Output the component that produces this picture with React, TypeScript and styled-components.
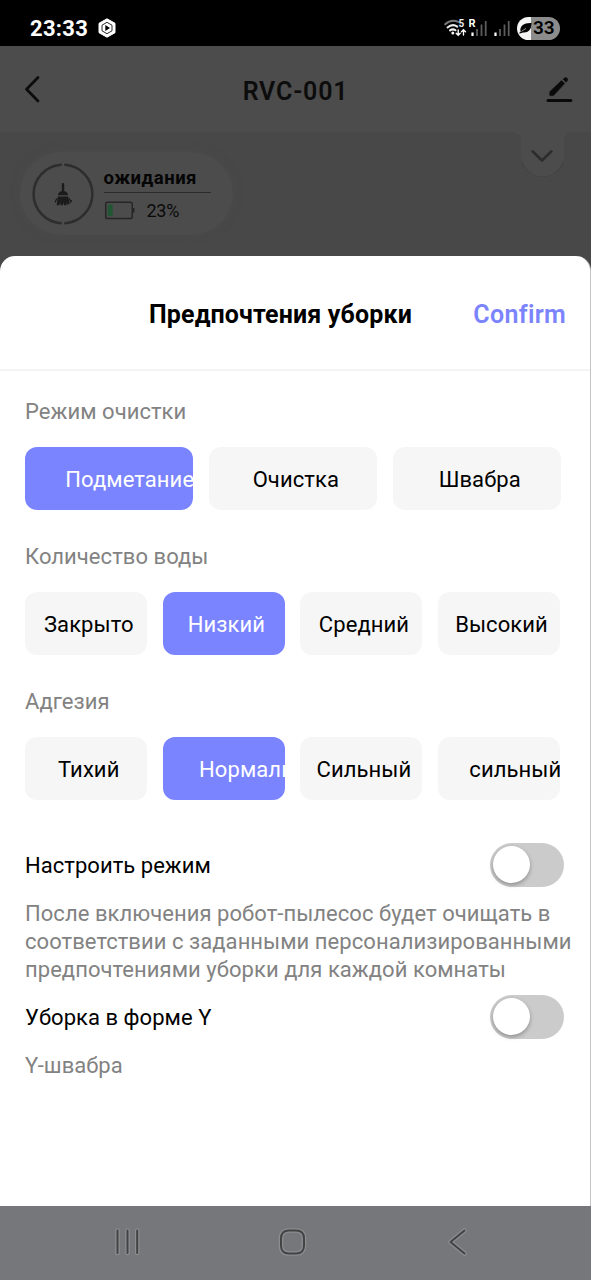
import React from 'react';
import styled, { createGlobalStyle } from 'styled-components';

const GlobalStyle = createGlobalStyle`
  *, *::before, *::after { box-sizing: border-box; }
  body { margin: 0; background: #484848; }
`;

const Screen = styled.div`
  width: 591px;
  height: 1280px;
  display: flex;
  flex-direction: column;
  overflow: hidden;
  background: #484848;
  color: #000;
  font-family: Roboto, 'Noto Sans', sans-serif;
`;

const StatusBar = styled.div`
  flex: none;
  height: 46px;
  display: flex;
  align-items: center;
  justify-content: space-between;
  padding: 10px 31px 0 30px;
  background: #000;
`;

const StatusGroup = styled.div<{ $gap: number }>`
  display: flex;
  align-items: center;
  gap: ${(p) => p.$gap}px;
`;

const Clock = styled.span`
  padding-top: 1px;
  color: #fff;
  font: 700 22px/26px Roboto, sans-serif;
  letter-spacing: 0.3px;
`;

const BatteryPill = styled.div`
  width: 43px;
  height: 23px;
  display: flex;
  align-items: center;
  border-radius: 12px;
  background: linear-gradient(90deg, #f4f4f4 0 14px, #8c8c8c 14px);
  color: #000;
  font: 600 19px/24px Roboto, sans-serif;
`;

const Header = styled.header`
  flex: none;
  height: 86px;
  display: grid;
  grid-template-columns: 48px 1fr 48px;
  align-items: center;
  padding: 0 16px;
  background: #4c4c4c;
`;

const HeaderAction = styled.div`
  display: flex;
  justify-content: flex-end;
`;

const DeviceName = styled.h1`
  margin: 0;
  padding-top: 5px;
  text-align: center;
  color: #0c0c0c;
  font-size: 25px;
  line-height: 30px;
  font-weight: 600;
  letter-spacing: 0.8px;
`;

const MapArea = styled.div`
  flex: none;
  height: 124px;
  display: flex;
  justify-content: space-between;
  align-items: flex-start;
  padding: 0 21px 0 20px;
`;

const StateCard = styled.div`
  width: 213px;
  height: 83px;
  margin-top: 20px;
  display: flex;
  align-items: center;
  gap: 9.5px;
  padding-left: 12px;
  border-radius: 42px;
  background: #4c4c4c;
  box-shadow: 0 0 8px rgba(76, 76, 76, 0.7);
`;

const StateInfo = styled.div`
  width: 107px;
  padding-top: 5px;
`;

const StateName = styled.div`
  height: 29px;
  padding-top: 3px;
  border-bottom: 1px solid #2b2b2b;
  color: #050505;
  font-size: 18.5px;
  line-height: 23px;
  font-weight: 700;
  letter-spacing: 0.5px;
`;

const BatteryLine = styled.div`
  height: 35px;
  display: flex;
  align-items: center;
  gap: 12px;
  color: #0a0a0a;
  font-size: 18px;
  line-height: 24px;
  letter-spacing: -0.3px;
`;

const Sheet = styled.section`
  flex: none;
  height: 950px;
  border-right: 1px solid #c4c4c4;
  border-radius: 15px 15px 0 0;
  background: #fff;
`;

const SheetHeader = styled.div`
  height: 115px;
  display: flex;
  align-items: center;
  justify-content: space-between;
  padding: 4px 24px 0 149px;
  border-bottom: 2px solid #f4f4f4;
`;

const SheetTitle = styled.h2`
  margin: 0;
  white-space: nowrap;
  font-size: 25px;
  line-height: 32px;
  font-weight: 700;
  letter-spacing: 0.15px;
`;

const Confirm = styled.button`
  padding: 0;
  border: 0;
  background: none;
  color: #7b84fc;
  font: 600 25px/32px Roboto, sans-serif;
  letter-spacing: 0.3px;
`;

const SheetBody = styled.div`
  padding: 26px 0 0 25px;
`;

const Group = styled.div`
  height: 145.2px;
`;

const GroupLabel = styled.div`
  height: 50px;
  color: #828282;
  font-size: 22px;
  line-height: 30px;
  letter-spacing: 0.05px;
`;

const Chips = styled.div`
  display: flex;
  gap: 15.6px;
`;

const Chip = styled.button<{ $width: number; $active?: boolean; $inset?: number }>`
  flex: none;
  width: ${(p) => p.$width}px;
  height: 62.5px;
  display: flex;
  align-items: center;
  justify-content: ${(p) => (p.$inset ? 'flex-start' : 'center')};
  padding: 3px 0 0 ${(p) => p.$inset ?? 5.5}px;
  border: 0;
  border-radius: 12px;
  overflow: hidden;
  background: ${(p) => (p.$active ? '#7b84ff' : '#f6f6f6')};
  color: ${(p) => (p.$active ? '#fff' : '#000')};
  font: 400 22px/30px Roboto, sans-serif;
  letter-spacing: 0.08px;
  white-space: nowrap;
`;

const Switches = styled.div`
  padding-top: 10.5px;
`;

const SwitchRow = styled.div`
  height: 44px;
  display: flex;
  align-items: center;
  justify-content: space-between;
  padding-right: 26px;
  font-size: 22px;
  line-height: 30px;
  letter-spacing: 0.04px;
`;

const SwitchLabel = styled.span`
  padding-top: 2px;
`;

const Toggle = styled.span`
  width: 74px;
  height: 44px;
  display: flex;
  align-items: center;
  padding: 0 0 1px 3px;
  border-radius: 22px;
  background: #cbcbcb;
`;

const Knob = styled.span`
  width: 37px;
  height: 37px;
  border-radius: 50%;
  background: #fff;
  box-shadow: 0 2px 4px rgba(0, 0, 0, 0.3);
`;

const Hint = styled.p<{ $height: number }>`
  height: ${(p) => p.$height}px;
  margin: 0;
  padding-top: 12.8px;
  color: #828282;
  font-size: 22px;
  line-height: 28.3px;
  letter-spacing: 0.05px;
  white-space: nowrap;
`;

const NavBar = styled.nav`
  flex: none;
  height: 74px;
  display: flex;
  align-items: flex-start;
  justify-content: space-between;
  padding: 20px 117px 0 111px;
  background: #76777a;
`;

const BackIcon = () => (
  <svg width="32" height="32" viewBox="0 0 32 32" fill="none" stroke="#0c0c0c" strokeWidth="2.7" strokeLinecap="round" strokeLinejoin="round">
    <path d="M22 4.5 10.5 16.2 22 28" />
  </svg>
);

const EditIcon = () => (
  <svg width="32" height="32" viewBox="0 0 32 32">
    <path d="M5 27.5h22.8" stroke="#0a0a0a" strokeWidth="3" strokeLinecap="round" />
    <path d="M6.8 22.6v-3.9L18.6 7.6l3 3L10.4 22.6Z" fill="#0a0a0a" stroke="#0a0a0a" strokeWidth=".6" strokeLinejoin="round" />
    <path d="m19.8 6.3 1.5-1.5a2.3 2.3 0 0 1 3.2 3.2L23 9.5Z" fill="#0a0a0a" />
  </svg>
);

const HexPlayIcon = () => (
  <svg width="18" height="20" viewBox="0 0 18 20">
    <path d="M9 .8 17 5.3v9.4L9 19.2 1 14.7V5.3Z" fill="#fff" stroke="#fff" strokeLinejoin="round" />
    <path d="m9 4.3 5 2.9v5.6l-5 2.9-5-2.9V7.2Z" fill="none" stroke="#111" strokeWidth=".9" />
    <path d="m7.3 7 4.7 3-4.7 3Z" fill="#000" />
  </svg>
);

const WifiIcon = () => (
  <svg width="23" height="20" viewBox="0 0 23 20" fill="none" strokeLinecap="round">
    <path d="M1.2 6.2C5 2.7 10 2 14.2 3.8" stroke="#777" strokeWidth="2" />
    <path d="M3.5 9.4c3-2.5 7-2.7 9.8-.8" stroke="#eee" strokeWidth="2" />
    <path d="M6 12.4c1.7-1.2 4-1.2 5.5-.1" stroke="#eee" strokeWidth="2" />
    <circle cx="8.8" cy="15" r="1.5" fill="#fff" />
    <path d="M14.2 12v5.3m-2-2 2 2 2-2M19.5 17v-5.3m-2 2 2-2 2 2" stroke="#fff" strokeWidth="1.4" />
    <text x="14.5" y="9" fill="#eee" fontSize="10" fontWeight="700" fontFamily="Roboto">5</text>
  </svg>
);

const SignalIcon = ({ roaming }: { roaming?: boolean }) => (
  <svg width={roaming ? 18 : 16} height="20" viewBox={roaming ? '0 0 18 20' : '0 0 16 20'}>
    <g transform={roaming ? 'translate(2 0)' : undefined}>
      <path d="M1.5 14.5v3.5" stroke="#fff" strokeWidth="2.2" />
      <path d="M6 11v7M10.5 6.5v11.5M14.7 3v15" stroke="#5c5c5c" strokeWidth="1.8" />
    </g>
    {roaming && <text x="-0.5" y="9" fill="#fff" fontSize="11" fontWeight="700" fontFamily="Roboto">R</text>}
  </svg>
);

const LeafIcon = () => (
  <svg width="16" height="16" viewBox="0 0 16 16">
    <path d="M4 11C3.4 6.4 6.4 3.8 14 3.6 13.8 9.3 11 12.8 5.6 11.9L2.8 13" fill="#000" stroke="#000" strokeWidth="1.1" strokeLinecap="round" />
    <path d="M4.4 11.4 9 8.4" stroke="#ccc" strokeWidth=".7" />
  </svg>
);

const RobotIcon = () => (
  <svg width="62" height="64" viewBox="0 0 62 64">
    <circle cx="31" cy="32" r="29.4" fill="none" stroke="#2d2d2d" strokeWidth="2.5" strokeLinecap="round" pathLength="360" strokeDasharray="171 9" strokeDashoffset="85.5" />
    <g fill="#1b1b1b">
      <path d="M29.8 21.5q1.2-1 2.4 0v8h-2.4Z" />
      <path d="M26 33.3c0-2.6 2-4.3 5-4.3s5 1.7 5 4.3Z" />
      <path d="M25.8 34.6h10.4l1.3 7.2-2 1.1-.9-3-.2 3.3h-2.4l-.4-3-.8 3h-2.4l.1-3.3-1.3 3.3h-2.6Z" />
      <path d="m24.8 36.6-1.8 4M37.3 36.2l1.2 4 1.3-2" fill="none" stroke="#1b1b1b" strokeWidth="1.2" />
    </g>
  </svg>
);

const RobotBattery = () => (
  <svg width="31" height="19" viewBox="0 0 31 19">
    <rect x="1.7" y="1.2" width="26.5" height="16.3" rx="1.8" fill="none" stroke="#262626" strokeWidth="1.5" />
    <rect x="3.7" y="3.7" width="5" height="11.4" fill="#215634" />
    <path d="M29.5 7v4.5" stroke="#262626" strokeWidth="2" />
  </svg>
);

const CollapseTab = () => (
  <svg width="56" height="50" viewBox="0 0 56 50">
    <path d="M0 0c5 1 7 4 7 9v16a21.5 21.5 0 0 0 43 0V9c0-5 2-8 6-9Z" fill="#4c4c4c" />
    <path d="M8 30a21.5 21.5 0 0 0 41 0" fill="none" stroke="#434343" strokeWidth="1.2" />
    <path d="m18.5 19.3 9.5 9.2 9.5-9.2" fill="none" stroke="#2d2d2d" strokeWidth="2.6" strokeLinecap="round" strokeLinejoin="round" />
  </svg>
);

const navShapes = {
  recents: 'M6.5 4.5v22.5M16.5 4.5v22.5M26.2 4.5v22.5',
  home: 'M12 4.5h7q8 0 8 8v7q0 8-8 8h-7q-8 0-8-8v-7q0-8 8-8Z',
  back: 'M22.5 4.5 8.5 16l14 11.5',
};

const NavIcon = ({ kind }: { kind: keyof typeof navShapes }) => (
  <svg width="32" height="32" viewBox="0 0 32 32" fill="none" strokeLinecap="round" strokeLinejoin="round">
    <path d={navShapes[kind]} stroke="#8b8c8e" strokeWidth="4.6" />
    <path d={navShapes[kind]} stroke="#434345" strokeWidth="2" />
  </svg>
);

type Option = { label: string; active?: boolean; inset?: number };

const groups: { label: string; width: number; options: Option[] }[] = [
  {
    label: 'Режим очистки',
    width: 168.3,
    options: [{ label: 'Подметание', active: true, inset: 40.3 }, { label: 'Очистка' }, { label: 'Швабра' }],
  },
  {
    label: 'Количество воды',
    width: 122,
    options: [{ label: 'Закрыто' }, { label: 'Низкий', active: true }, { label: 'Средний' }, { label: 'Высокий' }],
  },
  {
    label: 'Адгезия',
    width: 122,
    options: [
      { label: 'Тихий' },
      { label: 'Нормальный', active: true, inset: 36.5 },
      { label: 'Сильный' },
      { label: 'сильный', inset: 31.5 },
    ],
  },
];

export default function App() {
  return (
    <Screen>
      <GlobalStyle />
      <StatusBar>
        <StatusGroup $gap={10}>
          <Clock>23:33</Clock>
          <HexPlayIcon />
        </StatusGroup>
        <StatusGroup $gap={7}>
          <StatusGroup $gap={2}>
            <WifiIcon />
            <SignalIcon roaming />
          </StatusGroup>
          <SignalIcon />
          <BatteryPill>
            <LeafIcon />
            33
          </BatteryPill>
        </StatusGroup>
      </StatusBar>

      <Header>
        <BackIcon />
        <DeviceName>RVC-001</DeviceName>
        <HeaderAction>
          <EditIcon />
        </HeaderAction>
      </Header>

      <MapArea>
        <StateCard>
          <RobotIcon />
          <StateInfo>
            <StateName>ожидания</StateName>
            <BatteryLine>
              <RobotBattery />
              23%
            </BatteryLine>
          </StateInfo>
        </StateCard>
        <CollapseTab />
      </MapArea>

      <Sheet>
        <SheetHeader>
          <SheetTitle>Предпочтения уборки</SheetTitle>
          <Confirm>Confirm</Confirm>
        </SheetHeader>
        <SheetBody>
          {groups.map((group) => (
            <Group key={group.label}>
              <GroupLabel>{group.label}</GroupLabel>
              <Chips>
                {group.options.map((o) => (
                  <Chip key={o.label} $width={group.width} $active={o.active} $inset={o.inset}>
                    {o.label}
                  </Chip>
                ))}
              </Chips>
            </Group>
          ))}
          <Switches>
            <SwitchRow>
              <SwitchLabel>Настроить режим</SwitchLabel>
              <Toggle><Knob /></Toggle>
            </SwitchRow>
            <Hint $height={108}>
              После включения робот-пылесос будет очищать в<br />
              соответствии с заданными персонализированными<br />
              предпочтениями уборки для каждой комнаты
            </Hint>
            <SwitchRow>
              <SwitchLabel>Уборка в форме Y</SwitchLabel>
              <Toggle><Knob /></Toggle>
            </SwitchRow>
            <Hint $height={50}>Y-швабра</Hint>
          </Switches>
        </SheetBody>
      </Sheet>

      <NavBar>
        <NavIcon kind="recents" />
        <NavIcon kind="home" />
        <NavIcon kind="back" />
      </NavBar>
    </Screen>
  );
}
